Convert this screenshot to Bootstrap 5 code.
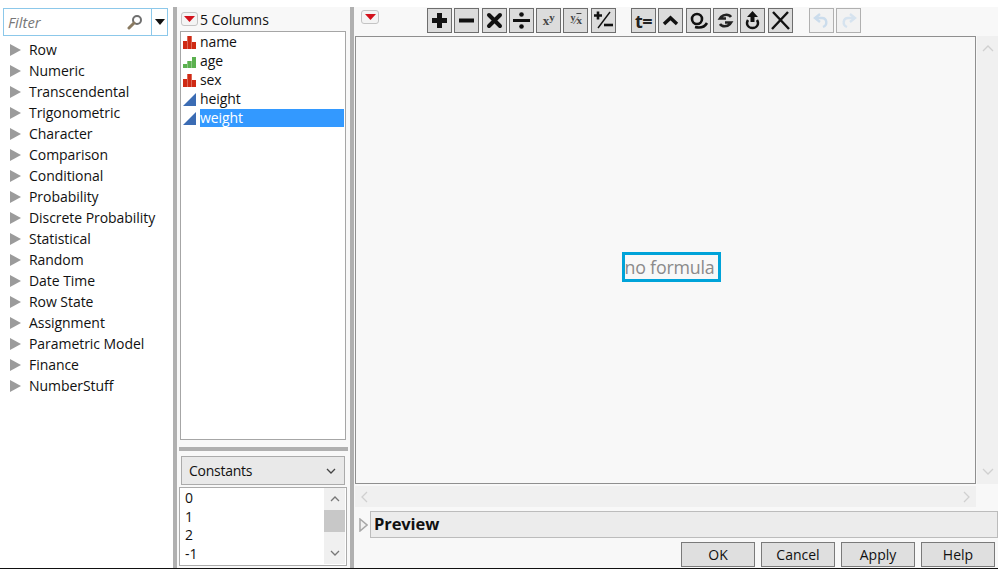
<!DOCTYPE html>
<html lang="en">
<head>
  <meta charset="UTF-8">
  <title>Formula Editor</title>
  <link href="https://cdn.jsdelivr.net/npm/bootstrap@5.3.0/dist/css/bootstrap.min.css" rel="stylesheet">
  <style>
    html, body { height: 569px; overflow: hidden; }
    body { background: #fff; font-family: "Open Sans", "Noto Sans", sans-serif; font-size: 14px; color: #111; }
    .app { height: 568px; }
    .app-end { height: 1px; background: #111; }
    .topgap { height: 7px; background: #fff; }
    .panes { height: 561px; }

    /* left function list */
    .fn-pane { width: 173px; padding: 1px 5px 0 3px; background: #fff; }
    .filter-box { height: 28px; border: 1px solid #8cc8ea; }
    .filter-input { font-style: italic; color: #777; padding-left: 4px; font-size: 14.800px; }
    .filter-drop { width: 16px; border-left: 1px solid #8cc8ea; }
    .fn-list { margin-top: 3px; }
    .fn-row { height: 21px; line-height: 21px; padding-left: 7px; gap: 8px; }
    .fn-tri { width: 11px; height: 12px; flex: none; }
    .fn-name { letter-spacing: -.05px; }

    .split-v { width: 4px; background: #b0b0b0; flex: none; }

    /* columns pane */
    .col-pane { width: 173px; background: #f8f8f8; padding: 0 4px 0 3px; }
    .col-head { height: 24px; padding: 5px 0 0 1px; gap: 2px; letter-spacing: -.05px; line-height: 16px; }
    .menu-btn { width: 17px; height: 14px; border: 1px solid #c4c4c4; border-radius: 3px; background: #f4f4f4; flex: none; }
    .col-list { height: 409px; background: #fff; border: 1px solid #a6a6a6; }
    .col-row { height: 19px; line-height: 18px; gap: 2px; padding-left: 1px; margin-right: 1px; letter-spacing: -.1px; }
    .col-row svg { width: 16px; height: 16px; flex: none; }
    .col-label { flex-grow: 1; }
    .col-row.sel .col-label { background: #3399ff; color: #fff; }
    .split-h { height: 4px; background: #b0b0b0; margin: 7px -2px 5px -1px; }
    .const-drop { height: 29px; margin: 0 1px 2px 1px; background: #e9e9e9; border: 1px solid #ababab; padding: 0 8px 0 7px; letter-spacing: -.25px; }
    .const-list { height: 79px; margin: 0 0 0 -1px; width: 168px; background: #fff; border: 1px solid #ababab; }
    .const-rows { padding: 1px 0 0 5px; line-height: 18.700px; }
    .const-bar { width: 21px; margin: 0 1px 1px 0; background: #f0f0f0; }
    .const-thumb { height: 22px; background: #c8c8c8; }
    .const-arrow { height: 22px; }

    /* formula pane */
    .edit-pane { background: #f8f8f8; padding-left: 1px; }
    .tool-row { height: 29px; padding-top: 1px; }
    .red-menu { width: 18px; height: 14px; margin: 2px 0 0 6px; }
    .tool-strip { margin-left: 48px; }
    .tool-group { gap: 2px; }
    .tool-group + .tool-group { margin-left: 15px; }
    .tool-group + .tool-group + .tool-group { margin-left: 16px; }
    .tool-btn { width: 25px; height: 25px; padding: 0; border-radius: 0; border: 1px solid #6e6e6e; background: #dcdcdc; color: #111;
      font-family: "Liberation Serif", serif; font-weight: 700; font-size: 13px; line-height: 1; display: flex; align-items: center; justify-content: center; margin-right: .3px; }
    .tool-btn svg { width: 21px; height: 21px; }
    .tool-btn.off { background: #f2f2f2; border-color: #b0b0b0; }
    .tool-btn .tx { color: #444; }
    .tool-btn .tx sup { font-size: 11px; top: -.4em; }
    .tool-btn .ro { font-size: 11px; letter-spacing: -.5px; }
    .tool-btn .ro sup { font-size: 10px; top: -.3em; }
    .tool-btn .ro u { text-decoration: overline; }
    .tool-btn .te { font-family: "Open Sans", sans-serif; font-size: 18px; color: #222; letter-spacing: -.5px; }
    .edit-mid { height: 448px; }
    .formula-box { width: 621px; height: 448px; background: #f8f8f8; border: 1px solid #8f8f8f; }
    .no-formula { width: 99px; height: 30px; margin: 14px 0 0 11px; border: 3px solid #00a3d9; color: #8a8a8a; font-size: 17.800px; line-height: 24px; letter-spacing: -.2px; white-space: nowrap; }
    .vbar { width: 22px; background: #f0f0f0; margin-left: 1px; }
    .hbar { height: 21px; width: 621px; margin-top: 2px; background: #f0f0f0; padding: 0 5px; }
    .hbar-fill { height: 21px; margin-top: 2px; background: #f8f8f8; flex-grow: 1; }
    .preview-row { margin-top: 4px; height: 27px; padding-left: 4px; gap: 2px; }
    .preview-bar { height: 27px; margin-right: 1px; background: #ececec; border: 1px solid #bcbcbc; font-weight: 700; font-size: 16.500px; line-height: 23px; padding-left: 3px; letter-spacing: -.1px; }
    .act-row { margin-top: 4px; padding-right: 4px; gap: 6px; }
    .act-btn { width: 74px; height: 25px; padding: 0; border-radius: 0; border: 1px solid #7a7a7a; background: #dfdfdf; color: #111; font-size: 14px; line-height: 23px; }
  </style>
</head>
<body>
  <div class="app">
    <div class="topgap"></div>
    <div class="panes d-flex">
      <!-- function groups -->
      <div class="fn-pane flex-shrink-0">
        <div class="filter-box d-flex">
          <div class="filter-input flex-grow-1 d-flex justify-content-between align-items-center pe-2">
            <span>Filter</span>
            <svg width="16" height="16" viewBox="0 0 16 16"><circle cx="10" cy="6" r="4" fill="#fff" stroke="#6f6f6f" stroke-width="2"/><path d="M7 9 2 14" stroke="#8a7a60" stroke-width="3" stroke-linecap="round"/></svg>
          </div>
          <div class="filter-drop d-flex align-items-center justify-content-center">
            <svg width="10" height="6" viewBox="0 0 10 6"><path d="M0 0h10L5 6z" fill="#111"/></svg>
          </div>
        </div>
        <div class="fn-list">
          <div class="fn-row d-flex align-items-center"><svg class="fn-tri" viewBox="0 0 11 12"><path d="M0 0 11 6 0 12z" fill="#9b9b9b"/></svg><span class="fn-name">Row</span></div>
          <div class="fn-row d-flex align-items-center"><svg class="fn-tri" viewBox="0 0 11 12"><path d="M0 0 11 6 0 12z" fill="#9b9b9b"/></svg><span class="fn-name">Numeric</span></div>
          <div class="fn-row d-flex align-items-center"><svg class="fn-tri" viewBox="0 0 11 12"><path d="M0 0 11 6 0 12z" fill="#9b9b9b"/></svg><span class="fn-name">Transcendental</span></div>
          <div class="fn-row d-flex align-items-center"><svg class="fn-tri" viewBox="0 0 11 12"><path d="M0 0 11 6 0 12z" fill="#9b9b9b"/></svg><span class="fn-name">Trigonometric</span></div>
          <div class="fn-row d-flex align-items-center"><svg class="fn-tri" viewBox="0 0 11 12"><path d="M0 0 11 6 0 12z" fill="#9b9b9b"/></svg><span class="fn-name">Character</span></div>
          <div class="fn-row d-flex align-items-center"><svg class="fn-tri" viewBox="0 0 11 12"><path d="M0 0 11 6 0 12z" fill="#9b9b9b"/></svg><span class="fn-name">Comparison</span></div>
          <div class="fn-row d-flex align-items-center"><svg class="fn-tri" viewBox="0 0 11 12"><path d="M0 0 11 6 0 12z" fill="#9b9b9b"/></svg><span class="fn-name">Conditional</span></div>
          <div class="fn-row d-flex align-items-center"><svg class="fn-tri" viewBox="0 0 11 12"><path d="M0 0 11 6 0 12z" fill="#9b9b9b"/></svg><span class="fn-name">Probability</span></div>
          <div class="fn-row d-flex align-items-center"><svg class="fn-tri" viewBox="0 0 11 12"><path d="M0 0 11 6 0 12z" fill="#9b9b9b"/></svg><span class="fn-name">Discrete Probability</span></div>
          <div class="fn-row d-flex align-items-center"><svg class="fn-tri" viewBox="0 0 11 12"><path d="M0 0 11 6 0 12z" fill="#9b9b9b"/></svg><span class="fn-name">Statistical</span></div>
          <div class="fn-row d-flex align-items-center"><svg class="fn-tri" viewBox="0 0 11 12"><path d="M0 0 11 6 0 12z" fill="#9b9b9b"/></svg><span class="fn-name">Random</span></div>
          <div class="fn-row d-flex align-items-center"><svg class="fn-tri" viewBox="0 0 11 12"><path d="M0 0 11 6 0 12z" fill="#9b9b9b"/></svg><span class="fn-name">Date Time</span></div>
          <div class="fn-row d-flex align-items-center"><svg class="fn-tri" viewBox="0 0 11 12"><path d="M0 0 11 6 0 12z" fill="#9b9b9b"/></svg><span class="fn-name">Row State</span></div>
          <div class="fn-row d-flex align-items-center"><svg class="fn-tri" viewBox="0 0 11 12"><path d="M0 0 11 6 0 12z" fill="#9b9b9b"/></svg><span class="fn-name">Assignment</span></div>
          <div class="fn-row d-flex align-items-center"><svg class="fn-tri" viewBox="0 0 11 12"><path d="M0 0 11 6 0 12z" fill="#9b9b9b"/></svg><span class="fn-name">Parametric Model</span></div>
          <div class="fn-row d-flex align-items-center"><svg class="fn-tri" viewBox="0 0 11 12"><path d="M0 0 11 6 0 12z" fill="#9b9b9b"/></svg><span class="fn-name">Finance</span></div>
          <div class="fn-row d-flex align-items-center"><svg class="fn-tri" viewBox="0 0 11 12"><path d="M0 0 11 6 0 12z" fill="#9b9b9b"/></svg><span class="fn-name">NumberStuff</span></div>
        </div>
      </div>
      <div class="split-v"></div>

      <!-- columns -->
      <div class="col-pane flex-shrink-0">
        <div class="col-head d-flex">
          <span class="menu-btn d-flex align-items-center justify-content-center"><svg width="11" height="6" viewBox="0 0 11 6"><path d="M0 0h11L5.500 6z" fill="#d3121c"/></svg></span>
          <span>5 Columns</span>
        </div>
        <div class="col-list">
          <div class="col-row d-flex align-items-center">
            <svg viewBox="0 0 16 16"><path d="M1 7h4v8H1zM5.300 2h4.400v13H5.300zM10 8h4v7h-4z" fill="#cf2a14"/></svg><span class="col-label">name</span>
          </div>
          <div class="col-row d-flex align-items-center">
            <svg viewBox="0 0 16 16"><path d="M1 11h4v4H1zM5.300 8h4.400v7H5.300zM10 4h4v11h-4z" fill="#5bb04f"/></svg><span class="col-label">age</span>
          </div>
          <div class="col-row d-flex align-items-center">
            <svg viewBox="0 0 16 16"><path d="M1 7h4v8H1zM5.300 2h4.400v13H5.300zM10 8h4v7h-4z" fill="#cf2a14"/></svg><span class="col-label">sex</span>
          </div>
          <div class="col-row d-flex align-items-center">
            <svg viewBox="0 0 16 16"><path d="M1 15 14 2v13z" fill="#3b6cb4"/></svg><span class="col-label">height</span>
          </div>
          <div class="col-row sel d-flex align-items-center">
            <svg viewBox="0 0 16 16"><path d="M1 15 14 2v13z" fill="#3b6cb4"/></svg><span class="col-label">weight</span>
          </div>
        </div>
        <div class="split-h"></div>
        <div class="const-drop d-flex align-items-center justify-content-between">
          <span>Constants</span>
          <svg width="10" height="6" viewBox="0 0 10 6"><path d="M1 1 5 5 9 1" fill="none" stroke="#444" stroke-width="1.300"/></svg>
        </div>
        <div class="const-list d-flex">
          <div class="const-rows flex-grow-1">
            <div>0</div><div>1</div><div>2</div><div>-1</div>
          </div>
          <div class="const-bar d-flex flex-column">
            <div class="const-arrow d-flex align-items-center justify-content-center"><svg width="10" height="6" viewBox="0 0 10 6"><path d="M1 5 5 1 9 5" fill="none" stroke="#777" stroke-width="1.300"/></svg></div>
            <div class="const-thumb"></div>
            <div class="flex-grow-1"></div>
            <div class="const-arrow d-flex align-items-center justify-content-center"><svg width="10" height="6" viewBox="0 0 10 6"><path d="M1 1 5 5 9 1" fill="none" stroke="#777" stroke-width="1.300"/></svg></div>
          </div>
        </div>
      </div>
      <div class="split-v"></div>

      <!-- formula editor -->
      <div class="edit-pane flex-grow-1">
        <div class="tool-row d-flex">
          <span class="menu-btn red-menu d-flex align-items-center justify-content-center"><svg width="11" height="6" viewBox="0 0 11 6"><path d="M0 0h11L5.500 6z" fill="#d3121c"/></svg></span>
          <div class="tool-strip d-flex">
            <div class="tool-group d-flex">
              <button class="btn tool-btn"><svg viewBox="0 0 21 21"><path d="M8 3h5v5h5v5h-5v5H8v-5H3V8h5z" fill="#111"/></svg></button>
              <button class="btn tool-btn"><svg viewBox="0 0 21 21"><path d="M3 8.500h15v4H3z" fill="#111"/></svg></button>
              <button class="btn tool-btn"><svg viewBox="0 0 21 21"><path d="M5 5l11 11M16 5 5 16" stroke="#111" stroke-width="4" stroke-linecap="round"/></svg></button>
              <button class="btn tool-btn"><svg viewBox="0 0 21 21"><circle cx="10.500" cy="4.500" r="2.300" fill="#111"/><path d="M2 9h17v3H2z" fill="#111"/><circle cx="10.500" cy="16.500" r="2.300" fill="#111"/></svg></button>
              <button class="btn tool-btn"><span class="tx">x<sup>y</sup></span></button>
              <button class="btn tool-btn"><span class="tx ro"><sup>y</sup>&#8725;<u>x</u></span></button>
              <button class="btn tool-btn"><svg viewBox="0 0 21 21"><path d="M1 5.500h8M5 1.500v8" stroke="#111" stroke-width="2.600"/><path d="M17 2 5 18" stroke="#111" stroke-width="1.400"/><path d="M11 15h9" stroke="#111" stroke-width="2.600"/></svg></button>
            </div>
            <div class="tool-group d-flex">
              <button class="btn tool-btn"><span class="te">t=</span></button>
              <button class="btn tool-btn"><svg viewBox="0 0 21 21"><path d="M4 14 10.500 8 17 14" fill="none" stroke="#111" stroke-width="3.500"/></svg></button>
              <button class="btn tool-btn"><svg viewBox="0 0 21 21"><circle cx="9" cy="9" r="5" fill="none" stroke="#111" stroke-width="2.600"/><path d="M7 17c4 1 9 1 12-4" fill="none" stroke="#111" stroke-width="2.600"/></svg></button>
              <button class="btn tool-btn"><svg viewBox="0 0 21 21"><path d="M16 7c-2-3-7-3-10 0l-1 1.500h6" fill="none" stroke="#222" stroke-width="2.600"/><path d="M5 14c2 3 7 3 10 0l1-1.500h-6" fill="none" stroke="#222" stroke-width="2.600"/></svg></button>
              <button class="btn tool-btn"><svg viewBox="0 0 21 21"><path d="M10.500 1 16 7h-3.500v5h-4V7H5z" fill="#111"/><path d="M6 10c-2.500 4 0 8 4.500 8s7-4 4.500-8" fill="none" stroke="#111" stroke-width="2.400"/></svg></button>
              <button class="btn tool-btn"><svg viewBox="0 0 21 21"><path d="M3 2 19 19M18 2 2 19" stroke="#111" stroke-width="2.400"/></svg></button>
            </div>
            <div class="tool-group d-flex">
              <button class="btn tool-btn off"><svg viewBox="0 0 21 21"><path d="M9 4 4 8l5 4" fill="none" stroke="#cbdcec" stroke-width="2.400"/><path d="M5 8h6c5 0 6 7 1 9" fill="none" stroke="#cbdcec" stroke-width="2.400"/></svg></button>
              <button class="btn tool-btn off"><svg viewBox="0 0 21 21"><path d="M12 4l5 4-5 4" fill="none" stroke="#d6e3ef" stroke-width="2.400"/><path d="M16 8h-6c-5 0-6 7-1 9" fill="none" stroke="#d6e3ef" stroke-width="2.400"/></svg></button>
            </div>
          </div>
        </div>
        <div class="edit-mid d-flex">
          <div class="formula-box d-flex align-items-center justify-content-center flex-shrink-0">
            <div class="no-formula">no formula</div>
          </div>
          <div class="vbar d-flex flex-column justify-content-between align-items-center py-2">
            <svg width="12" height="8" viewBox="0 0 12 8"><path d="M1 7 6 2l5 5" fill="none" stroke="#d0d0d0" stroke-width="1.300"/></svg>
            <svg width="12" height="8" viewBox="0 0 12 8"><path d="M1 1 6 6l5-5" fill="none" stroke="#d0d0d0" stroke-width="1.300"/></svg>
          </div>
        </div>
        <div class="d-flex">
          <div class="hbar d-flex align-items-center justify-content-between flex-shrink-0">
            <svg width="8" height="12" viewBox="0 0 8 12"><path d="M7 1 2 6l5 5" fill="none" stroke="#d0d0d0" stroke-width="1.300"/></svg>
            <svg width="8" height="12" viewBox="0 0 8 12"><path d="M1 1l5 5-5 5" fill="none" stroke="#d0d0d0" stroke-width="1.300"/></svg>
          </div>
          <div class="hbar-fill"></div>
        </div>
        <div class="preview-row d-flex align-items-center">
          <svg width="9" height="14" class="flex-shrink-0" viewBox="0 0 9 14"><path d="M1 1 8 7 1 13z" fill="#f2f2f2" stroke="#a8a8a8" stroke-width="1.500"/></svg>
          <div class="preview-bar flex-grow-1">Preview</div>
        </div>
        <div class="act-row d-flex justify-content-end">
          <button class="btn act-btn">OK</button>
          <button class="btn act-btn">Cancel</button>
          <button class="btn act-btn">Apply</button>
          <button class="btn act-btn">Help</button>
        </div>
      </div>
    </div>
  </div>
  <div class="app-end"></div>
  <script src="https://cdn.jsdelivr.net/npm/bootstrap@5.3.0/dist/js/bootstrap.bundle.min.js"></script>
</body>
</html>
